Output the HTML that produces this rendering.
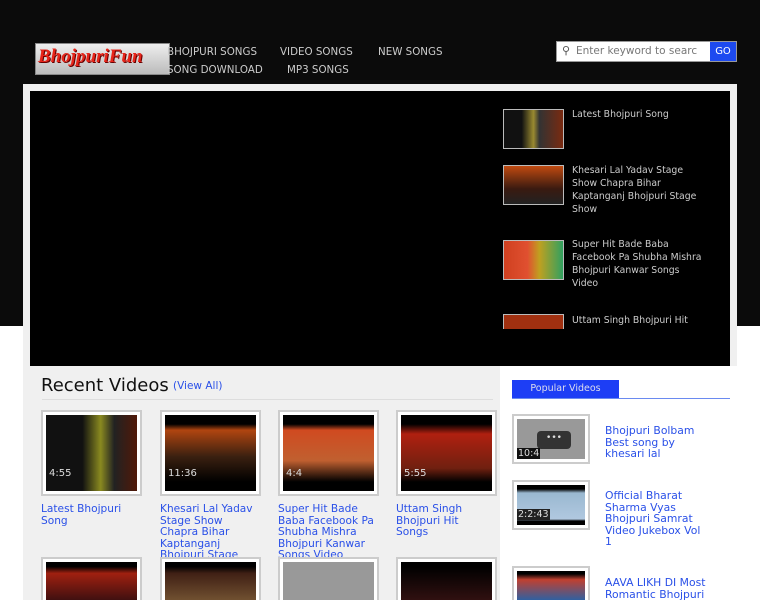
<!DOCTYPE html>
<html><head><meta charset="utf-8"><style>
*{margin:0;padding:0;box-sizing:border-box}
html,body{width:760px;height:600px;overflow:hidden}
body{background:#fff;font-family:"DejaVu Sans","Liberation Sans",sans-serif;position:relative}
.top{position:absolute;left:0;top:0;width:760px;height:326px;background:#0b0b0b}
.a{position:absolute}
.nav{color:#ccc;font-size:10.3px}
.logo{left:35px;top:43px;width:135px;height:32px;background:linear-gradient(#eee,#bbb);border:1px solid #888;color:#e8251a;font:italic bold 19px "Liberation Serif",serif;padding:2px 0 0 2px;text-shadow:1px 1px 0 #600;overflow:hidden}
.search{left:556px;top:41px;width:181px;height:21px;background:#fff;border:1px solid #999}
.go{left:710px;top:42px;width:26px;height:19px;background:#1d4af0;color:#fff;font-size:10px;text-align:center;line-height:19px}
.panel{left:23px;top:84px;width:714px;height:516px;background:#f0f0f0}
.video{left:30px;top:91px;width:700px;height:275px;background:#000}
.right{left:500px;top:366px;width:237px;height:234px;background:#fff}
.pl{color:#ccc;font-size:9.3px;line-height:13px}
.pt{border:1px solid #bbb;width:61px;height:40px}
.card{width:101px;height:86px;border:2px solid #ccc;background:#fff;padding:3px;overflow:hidden}
.card div{width:100%;height:100%;background:#000;position:relative}
.card.b{height:43px;border-bottom:0;padding-bottom:0}
.dur{position:absolute;left:3px;bottom:12px;color:#ddd;font-size:10px}
.ct{color:#2a50e8;font-size:10.6px;line-height:11.5px;width:112px;height:58px;overflow:hidden}
.pc{width:78px;height:50px;border:2px solid #ccc;padding:3px;background:#fff;overflow:hidden}
.pc div{width:100%;height:100%;position:relative}
.ptx{color:#2a50e8;font-size:10.8px;line-height:11.5px;width:112px;overflow:hidden}
</style></head><body>
<div class="top"></div>
<div class="a logo">BhojpuriFun</div>
<div class="a nav" style="left:167px;top:46px">BHOJPURI SONGS</div>
<div class="a nav" style="left:280px;top:46px">VIDEO SONGS</div>
<div class="a nav" style="left:378px;top:46px">NEW SONGS</div>
<div class="a nav" style="left:167px;top:64px">SONG DOWNLOAD</div>
<div class="a nav" style="left:287px;top:64px">MP3 SONGS</div>
<div class="a search"><span style="position:absolute;left:5px;top:2px;font-size:11px;color:#555">&#9906;</span><span style="position:absolute;left:19px;top:3px;font-size:10.5px;color:#777">Enter keyword to searc</span></div>
<div class="a go">GO</div>
<div class="a panel"></div>
<div class="a video"></div>
<div class="a right"></div>

<div class="a pt" style="left:503px;top:109px;background:linear-gradient(90deg,#111 30%,#9a8a30 50%,#333 60%,#7a2a10)"></div>
<div class="a pl" style="left:572px;top:108px">Latest Bhojpuri Song</div>
<div class="a pt" style="left:503px;top:165px;background:linear-gradient(#c04a10,#3a1a10 60%,#222)"></div>
<div class="a pl" style="left:572px;top:164px">Khesari Lal Yadav Stage<br>Show Chapra Bihar<br>Kaptanganj Bhojpuri Stage<br>Show</div>
<div class="a pt" style="left:503px;top:240px;background:linear-gradient(90deg,#d04020,#e05030 40%,#c0a020 60%,#30a060)"></div>
<div class="a pl" style="left:572px;top:238px">Super Hit Bade Baba<br>Facebook Pa Shubha Mishra<br>Bhojpuri Kanwar Songs<br>Video</div>
<div class="a pt" style="left:503px;top:314px;height:15px;border-bottom:0;background:#a03010"></div>
<div class="a pl" style="left:572px;top:314px">Uttam Singh Bhojpuri Hit</div>

<div class="a" style="left:41px;top:375px;font-size:18px;color:#111">Recent Videos</div>
<div class="a" style="left:173px;top:380px;font-size:10.5px;color:#2a50e8">(View All)</div>
<div class="a" style="left:42px;top:399px;width:451px;height:1px;background:#ddd"></div>

<div class="a card" style="left:41px;top:410px"><div style="background:linear-gradient(90deg,#111 40%,#8a8a20 60%,#222 75%,#501808)"><span class="dur">4:55</span></div></div>
<div class="a card" style="left:160px;top:410px"><div style="background:linear-gradient(#000 12%,#b04510 20%,#3a2010 55%,#000 88%)"><span class="dur">11:36</span></div></div>
<div class="a card" style="left:278px;top:410px"><div style="background:linear-gradient(#000 12%,#d04a20 20%,#c06030 60%,#000 88%)"><span class="dur">4:4</span></div></div>
<div class="a card" style="left:396px;top:410px"><div style="background:linear-gradient(#000 12%,#b02010 25%,#702010 70%,#000 88%)"><span class="dur">5:55</span></div></div>
<div class="a ct" style="left:41px;top:504px;width:100px">Latest Bhojpuri Song</div>
<div class="a ct" style="left:160px;top:504px;width:100px;height:56px">Khesari Lal Yadav Stage Show Chapra Bihar Kaptanganj Bhojpuri Stage</div>
<div class="a ct" style="left:278px;top:504px;width:100px;height:56px">Super Hit Bade Baba Facebook Pa Shubha Mishra Bhojpuri Kanwar Songs Video</div>
<div class="a ct" style="left:396px;top:504px;width:80px">Uttam Singh Bhojpuri Hit Songs</div>
<div class="a card b" style="left:41px;top:557px"><div style="background:linear-gradient(#000 12%,#a02010 30%,#401010)"></div></div>
<div class="a card b" style="left:160px;top:557px"><div style="background:linear-gradient(#000 12%,#402015 30%,#705030)"></div></div>
<div class="a card b" style="left:278px;top:557px"><div style="background:#999"></div></div>
<div class="a card b" style="left:396px;top:557px"><div style="background:linear-gradient(#000 12%,#301010)"></div></div>

<div class="a" style="left:512px;top:380px;width:107px;height:18px;background:#1d3ef5;color:#dde;font-size:9.5px;text-align:center;line-height:18px">Popular Videos</div>
<div class="a" style="left:512px;top:398px;width:218px;height:1px;background:#6a8af0"></div>
<div class="a pc" style="left:512px;top:414px"><div style="background:#999"><span style="position:absolute;left:20px;top:12px;width:34px;height:18px;background:#333;border-radius:4px;color:#ddd;font-size:9px;text-align:center;line-height:14px">•••</span><span style="position:absolute;left:0;bottom:0;background:#111;color:#ddd;font-size:9.5px;padding:0 1px">10:4</span></div></div>
<div class="a ptx" style="left:605px;top:425px;width:95px">Bhojpuri Bolbam Best song by khesari lal</div>
<div class="a pc" style="left:512px;top:480px"><div style="background:linear-gradient(#000 10%,#9ab8d0 20%,#b0c8e0 85%,#000 90%)"><span style="position:absolute;left:0;bottom:5px;background:#222;color:#ddd;font-size:9.5px;padding:0 1px">2:2:43</span></div></div>
<div class="a ptx" style="left:605px;top:490px;width:100px">Official Bharat Sharma Vyas Bhojpuri Samrat Video Jukebox Vol 1</div>
<div class="a pc" style="left:512px;top:566px;height:34px;border-bottom:0;padding-bottom:0"><div style="background:linear-gradient(#000 10%,#c04030 30%,#3060a0)"></div></div>
<div class="a ptx" style="left:605px;top:577px;height:23px">AAVA LIKH DI Most Romantic Bhojpuri</div>
</body></html>
